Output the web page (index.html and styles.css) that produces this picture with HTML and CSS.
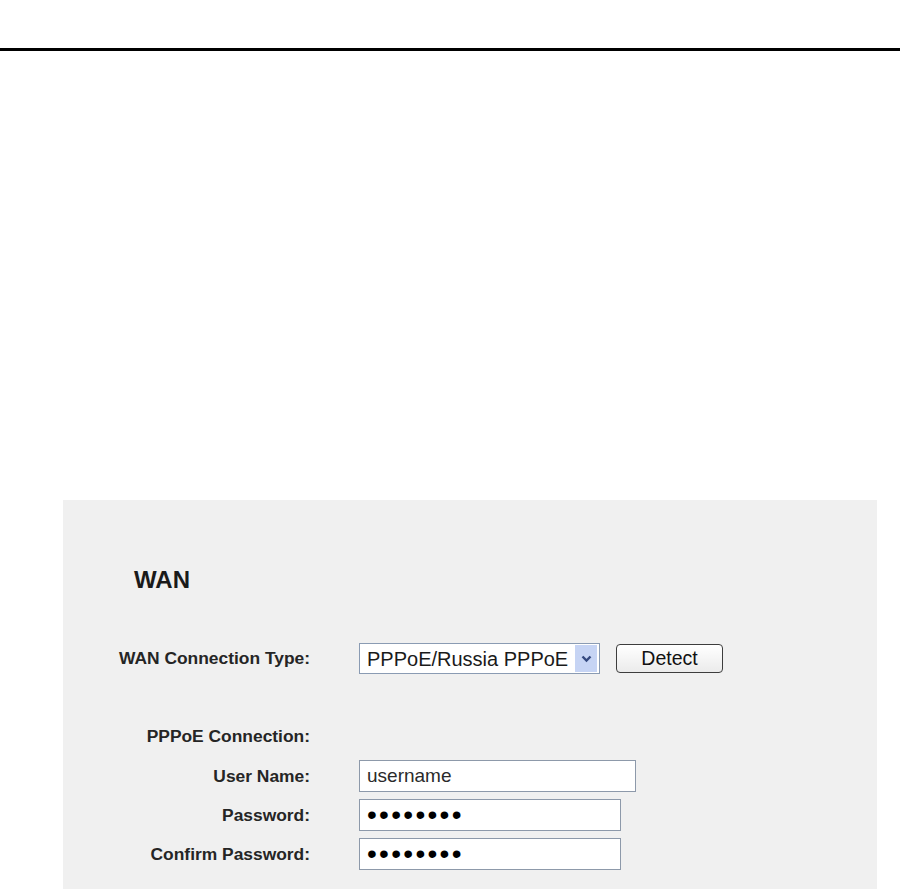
FILE: index.html
```html
<!DOCTYPE html>
<html lang="en">
<head>
  <meta charset="UTF-8" />
  <title>WAN</title>
  <link rel="stylesheet" href="styles.css">
</head>
<body>
  <div class="top-rule"></div>

  <div class="panel">
    <h1 class="panel-title">WAN</h1>

    <div class="row row-type">
      <label for="wanType">WAN Connection Type:</label>
      <span class="select-wrap">
        <select id="wanType">
          <option>PPPoE/Russia PPPoE</option>
        </select>
        <span class="select-arrow">
          <svg width="11" height="8" viewBox="0 0 11 8"><path d="M1.5 1.5 L5.5 5.5 L9.5 1.5" fill="none" stroke="#34497f" stroke-width="2.4"/></svg>
        </span>
      </span>
      <button type="button" class="btn">Detect</button>
    </div>

    <div class="row row-section">
      <label>PPPoE Connection:</label>
    </div>

    <div class="row">
      <label for="user">User Name:</label>
      <input id="user" type="text" class="field wide" value="username">
    </div>
    <div class="row">
      <label for="pass">Password:</label>
      <input id="pass" type="password" class="field pass" value="password">
    </div>
    <div class="row">
      <label for="pass2">Confirm Password:</label>
      <input id="pass2" type="password" class="field pass" value="password">
    </div>
  </div>
</body>
</html>
```

FILE: styles.css
```css
body {
  margin: 0;
  background-color: #fff;
  font-family: "Liberation Sans", Arial, sans-serif;
  color: #222;
  overflow: hidden;
}

.top-rule {
  margin-top: 48px;
  border-top: 3px solid #000;
}

.panel {
  margin: 449px 0 0 63px;
  width: 814px;
  height: 420px;
  padding-top: 60px;
  background-color: #f0f0f0;
  box-sizing: border-box;
}

.panel-title {
  margin: 0 0 40px 71px;
  height: 40px;
  line-height: 40px;
  font-size: 24px;
  font-weight: 700;
  color: #1a1a1a;
}

.row {
  display: flex;
  align-items: center;
  height: 32px;
  margin-bottom: 7px;
}

.row label {
  width: 247px;
  margin-right: 49px;
  text-align: right;
  font-size: 17.4px;
  font-weight: 700;
  color: #252525;
}

.row-type {
  height: 37px;
  margin-bottom: 43px;
}

.row-section {
  margin-bottom: 8px;
}

.select-wrap {
  position: relative;
  display: inline-block;
  width: 241px;
  height: 31px;
}

.select-wrap select {
  appearance: none;
  -webkit-appearance: none;
  width: 100%;
  height: 100%;
  margin: 0;
  padding: 0 0 0 7px;
  border: 1px solid #8a9bb3;
  border-radius: 0;
  background-color: #fff;
  font-family: "Liberation Sans", Arial, sans-serif;
  font-size: 20px;
  color: #1a1a1a;
}

.select-arrow {
  position: absolute;
  top: 2px;
  right: 3px;
  width: 22px;
  height: 27px;
  display: flex;
  align-items: center;
  justify-content: center;
  background-color: #c6d4f4;
}

.btn {
  margin-left: 16px;
  width: 107px;
  height: 29px;
  padding: 0;
  border: 1px solid #3d3d3d;
  border-radius: 4px;
  background: linear-gradient(#ffffff, #ebebeb);
  font-family: "Liberation Sans", Arial, sans-serif;
  font-size: 19.5px;
  color: #111;
}

.field {
  box-sizing: border-box;
  height: 32px;
  margin: 0;
  padding: 0 0 0 7px;
  border: 1px solid #8d99aa;
  background-color: #fff;
  font-family: "Liberation Sans", Arial, sans-serif;
  font-size: 19px;
  color: #2a2a2a;
}

.wide {
  width: 277px;
}

.pass {
  width: 262px;
  font-size: 28px;
  letter-spacing: 2.3px;
  color: #000;
}
```
